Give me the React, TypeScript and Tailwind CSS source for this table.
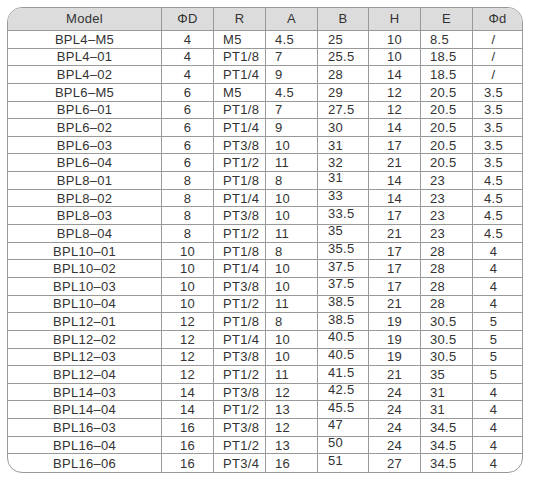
const headers = ['Model', 'ΦD', 'R', 'A', 'B', 'H', 'E', 'Φd'];

const rows: string[][] = [
  ['BPL4–M5', '4', 'M5', '4.5', '25', '10', '8.5', '/'],
  ['BPL4–01', '4', 'PT1/8', '7', '25.5', '10', '18.5', '/'],
  ['BPL4–02', '4', 'PT1/4', '9', '28', '14', '18.5', '/'],
  ['BPL6–M5', '6', 'M5', '4.5', '29', '12', '20.5', '3.5'],
  ['BPL6–01', '6', 'PT1/8', '7', '27.5', '12', '20.5', '3.5'],
  ['BPL6–02', '6', 'PT1/4', '9', '30', '14', '20.5', '3.5'],
  ['BPL6–03', '6', 'PT3/8', '10', '31', '17', '20.5', '3.5'],
  ['BPL6–04', '6', 'PT1/2', '11', '32', '21', '20.5', '3.5'],
  ['BPL8–01', '8', 'PT1/8', '8', '31', '14', '23', '4.5'],
  ['BPL8–02', '8', 'PT1/4', '10', '33', '14', '23', '4.5'],
  ['BPL8–03', '8', 'PT3/8', '10', '33.5', '17', '23', '4.5'],
  ['BPL8–04', '8', 'PT1/2', '11', '35', '21', '23', '4.5'],
  ['BPL10–01', '10', 'PT1/8', '8', '35.5', '17', '28', '4'],
  ['BPL10–02', '10', 'PT1/4', '10', '37.5', '17', '28', '4'],
  ['BPL10–03', '10', 'PT3/8', '10', '37.5', '17', '28', '4'],
  ['BPL10–04', '10', 'PT1/2', '11', '38.5', '21', '28', '4'],
  ['BPL12–01', '12', 'PT1/8', '8', '38.5', '19', '30.5', '5'],
  ['BPL12–02', '12', 'PT1/4', '10', '40.5', '19', '30.5', '5'],
  ['BPL12–03', '12', 'PT3/8', '10', '40.5', '19', '30.5', '5'],
  ['BPL12–04', '12', 'PT1/2', '11', '41.5', '21', '35', '5'],
  ['BPL14–03', '14', 'PT3/8', '12', '42.5', '24', '31', '4'],
  ['BPL14–04', '14', 'PT1/2', '13', '45.5', '24', '31', '4'],
  ['BPL16–03', '16', 'PT3/8', '12', '47', '24', '34.5', '4'],
  ['BPL16–04', '16', 'PT1/2', '13', '50', '24', '34.5', '4'],
  ['BPL16–06', '16', 'PT3/4', '16', '51', '27', '34.5', '4'],
];

// per column alignment for the body cells
const cellAlign = [
  'justify-center',
  'justify-center',
  'justify-start pl-[9px]',
  'justify-start pl-[9px]',
  'justify-start pl-[10px]',
  'justify-center',
  'justify-start pl-[9px]',
  'justify-center pr-[8px]',
];

export default function App() {
  return (
    <div className="min-h-[484px] w-[540px] bg-white pl-[7px] pt-[7px] font-['Liberation_Sans',Arial,sans-serif] text-[13px] text-[#333]">
      <div className="w-[516px] overflow-hidden rounded-[15px] border border-[#999]">
        <div className="grid grid-cols-[154px_52px_52px_52px_51px_52px_52px_49px] grid-rows-[23px] auto-rows-[17.65px]">
          {headers.map((h, i) => (
            <div
              key={h}
              className={`flex items-center justify-center border-b border-[#999] bg-[#dcdcdc] tracking-[0.3px] ${i < 7 ? 'border-r' : ''}`}
            >
              {h}
            </div>
          ))}
          {rows.map((row, r) =>
            row.map((v, c) => (
              <div
                key={`${r}-${c}`}
                className={`flex items-center border-[#999] leading-none tracking-[0.3px] ${cellAlign[c]} ${c < 7 ? 'border-r' : ''} ${r < rows.length - 1 ? 'border-b' : ''} ${c === 4 && r >= 8 ? 'pb-[5px]' : ''}`}
              >
                {v}
              </div>
            ))
          )}
        </div>
      </div>
    </div>
  );
}
